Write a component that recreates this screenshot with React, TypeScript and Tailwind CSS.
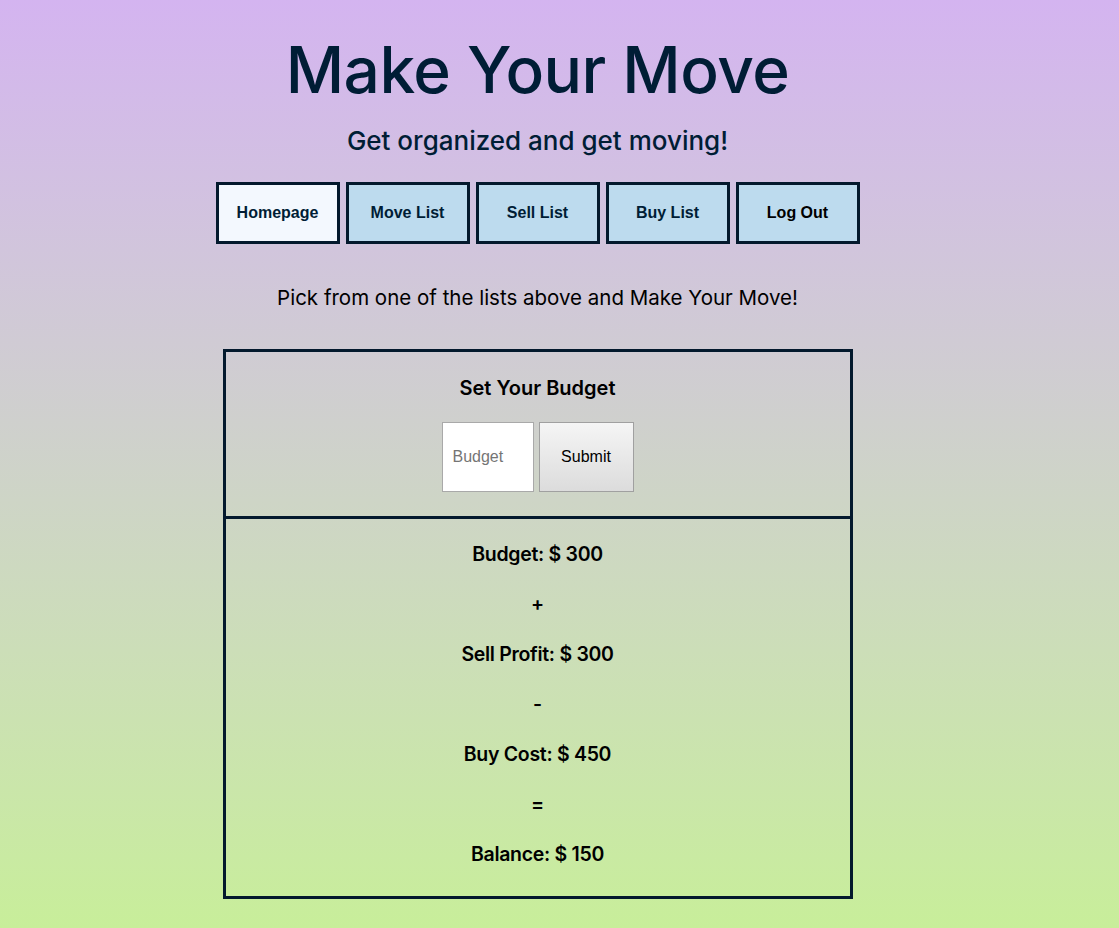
const poppins = { fontFamily: '"Inter", "Noto Sans", sans-serif' };

const navItems = ["Homepage", "Move List", "Sell List", "Buy List", "Log Out"];

const lines = [
  "Budget: $ 300",
  "+",
  "Sell Profit: $ 300",
  "-",
  "Buy Cost: $ 450",
  "=",
  "Balance: $ 150",
];

export default function App() {
  return (
    <div
      className="min-h-[928px] w-full bg-gradient-to-b from-[#d4b4f0] to-[#c8ee9a] text-[#001d35]"
      style={poppins}
    >
      <div className="flex w-[1075px] flex-col items-center pt-[30px] text-center">
        <h1 className="text-[64px] font-medium leading-[80px] tracking-[-0.5px]">Make Your Move</h1>
        <h2 className="mt-[14px] text-[26px] font-medium leading-[34px]">Get organized and get moving!</h2>

        <nav className="mt-[24px] flex gap-[6px]">
          {navItems.map((item, i) => (
            <button
              key={item}
              className={
                "h-[62px] w-[124px] border-[3px] border-[#03192d] font-[family-name:'Liberation_Sans',Arial,sans-serif] text-[16px] font-bold " +
                (i === 0 ? "bg-[#f3f8fe]" : "bg-[#bddbee]") +
                (i === 4 ? " text-black" : " text-[#001d35]")
              }
            >
              {item}
            </button>
          ))}
        </nav>

        <p className="mt-[41px] text-[20.5px] leading-[26px] text-black">
          Pick from one of the lists above and Make Your Move!
        </p>

        <div className="mt-[38px] w-[630px] border-[3px] border-[#03192d] text-black">
          <div className="flex flex-col items-center pb-[24px] pt-[22px]">
            <h3 className="text-[20px] font-semibold leading-[28px]">Set Your Budget</h3>
            <div className="mt-[20px] flex gap-[5px]">
              <input
                placeholder="Budget"
                className="h-[70px] w-[92px] border border-[#a9a9a9] bg-white px-[10px] font-[family-name:'Liberation_Sans',Arial,sans-serif] text-[16px] text-black placeholder:text-[#757575]"
              />
              <button className="h-[70px] w-[95px] border border-[#a0a0a0] bg-gradient-to-b from-[#f5f5f5] to-[#dcdcdc] font-[family-name:'Liberation_Sans',Arial,sans-serif] text-[16px] text-black">
                Submit
              </button>
            </div>
          </div>
          <div className="flex flex-col items-center border-t-[3px] border-[#03192d] pb-[7px] pt-[20px]">
            {lines.map((l, i) => (
              <div key={i} className="h-[50px] text-[19.5px] font-semibold leading-[30px] tracking-[-0.3px]">
                {l}
              </div>
            ))}
          </div>
        </div>
      </div>
    </div>
  );
}
